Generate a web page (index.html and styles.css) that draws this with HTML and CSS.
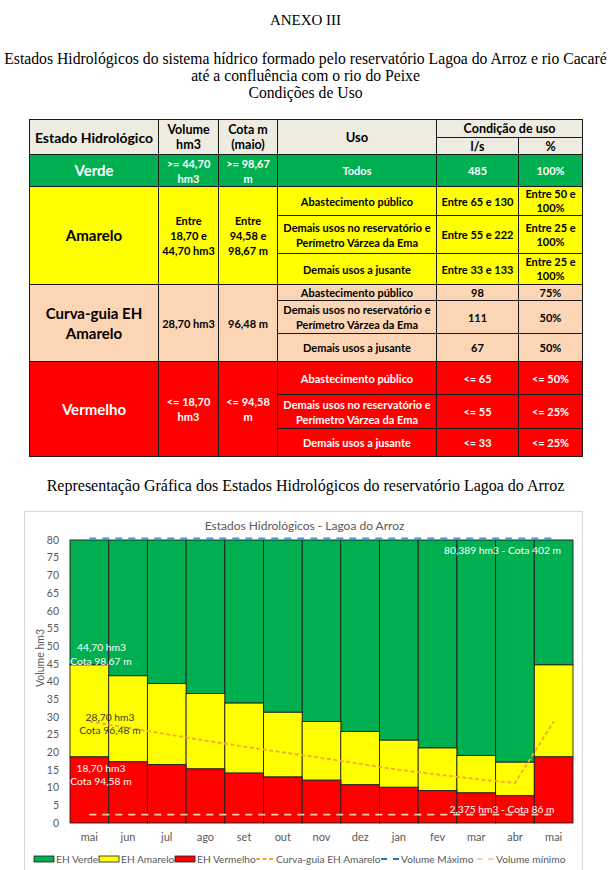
FILE: index.html
```html
<!DOCTYPE html>
<html lang="pt">
<head>
<meta charset="utf-8">
<title>Anexo III - Estados Hidrológicos</title>
<link rel="stylesheet" href="styles.css">
</head>
<body>
<header class="doc-head">
  <p class="annex">ANEXO III</p>
  <p class="title">Estados Hidrológicos do sistema hídrico formado pelo reservatório Lagoa do Arroz e rio Cacaré<br>até a confluência com o rio do Peixe<br>Condições de Uso</p>
</header>

<table class="eh-table">
  <colgroup>
    <col class="c-estado"><col class="c-vol"><col class="c-cota"><col class="c-uso"><col class="c-ls"><col class="c-pct">
  </colgroup>
  <thead>
    <tr class="h1">
      <th rowspan="2" class="big">Estado Hidrológico</th>
      <th rowspan="2">Volume<br>hm3</th>
      <th rowspan="2">Cota m<br>(maio)</th>
      <th rowspan="2" class="uso">Uso</th>
      <th colspan="2">Condição de uso</th>
    </tr>
    <tr class="h2">
      <th>l/s</th>
      <th class="pct-h">%</th>
    </tr>
  </thead>
  <tbody>
    <tr class="verde r-verde">
      <td class="state">Verde</td>
      <td>&gt;= 44,70<br>hm3</td>
      <td>&gt;= 98,67<br>m</td>
      <td>Todos</td>
      <td>485</td>
      <td>100%</td>
    </tr>
    <tr class="amarelo r-am1">
      <td rowspan="3" class="state">Amarelo</td>
      <td rowspan="3">Entre<br>18,70 e<br>44,70 hm3</td>
      <td rowspan="3">Entre<br>94,58 e<br>98,67 m</td>
      <td>Abastecimento público</td>
      <td>Entre 65 e 130</td>
      <td class="tight">Entre 50 e<br>100%</td>
    </tr>
    <tr class="amarelo r-am2">
      <td>Demais usos no reservatório e<br>Perímetro Várzea da Ema</td>
      <td>Entre 55 e 222</td>
      <td class="tight">Entre 25 e<br>100%</td>
    </tr>
    <tr class="amarelo r-am3">
      <td>Demais usos a jusante</td>
      <td>Entre 33 e 133</td>
      <td class="tight">Entre 25 e<br>100%</td>
    </tr>
    <tr class="curva r-cu1">
      <td rowspan="3" class="state state-2">Curva-guia EH<br>Amarelo</td>
      <td rowspan="3">28,70 hm3</td>
      <td rowspan="3">96,48 m</td>
      <td>Abastecimento público</td>
      <td>98</td>
      <td>75%</td>
    </tr>
    <tr class="curva r-cu2">
      <td>Demais usos no reservatório e<br>Perímetro Várzea da Ema</td>
      <td>111</td>
      <td>50%</td>
    </tr>
    <tr class="curva r-cu3">
      <td>Demais usos a jusante</td>
      <td>67</td>
      <td>50%</td>
    </tr>
    <tr class="vermelho r-ve1">
      <td rowspan="3" class="state">Vermelho</td>
      <td rowspan="3">&lt;= 18,70<br>hm3</td>
      <td rowspan="3">&lt;= 94,58<br>m</td>
      <td>Abastecimento público</td>
      <td>&lt;= 65</td>
      <td>&lt;= 50%</td>
    </tr>
    <tr class="vermelho r-ve2">
      <td>Demais usos no reservatório e<br>Perímetro Várzea da Ema</td>
      <td>&lt;= 55</td>
      <td>&lt;= 25%</td>
    </tr>
    <tr class="vermelho r-ve3">
      <td>Demais usos a jusante</td>
      <td>&lt;= 33</td>
      <td>&lt;= 25%</td>
    </tr>
  </tbody>
</table>

<p class="caption">Representação Gráfica dos Estados Hidrológicos do reservatório Lagoa do Arroz</p>

<div class="chart">
<svg class="chart-svg" width="557" height="359" viewBox="25 509 557 359" xmlns="http://www.w3.org/2000/svg">
  <text class="ct" x="304.5" y="526.5" text-anchor="middle">Estados Hidrológicos - Lagoa do Arroz</text>

  <g class="yt" text-anchor="end">
    <text x="59" y="540.7">80</text>
    <text x="59" y="558.4">75</text>
    <text x="59" y="576.1">70</text>
    <text x="59" y="593.8">65</text>
    <text x="59" y="611.5">60</text>
    <text x="59" y="629.1">55</text>
    <text x="59" y="646.8">50</text>
    <text x="59" y="664.5">45</text>
    <text x="59" y="682.2">40</text>
    <text x="59" y="699.9">35</text>
    <text x="59" y="717.6">30</text>
    <text x="59" y="735.3">25</text>
    <text x="59" y="753.0">20</text>
    <text x="59" y="770.6">15</text>
    <text x="59" y="788.3">10</text>
    <text x="59" y="806.0">5</text>
    <text x="59" y="823.7">0</text>
  </g>
  <text class="yt" transform="translate(44 655) rotate(-90)" text-anchor="middle">Volume hm3</text>

  <g class="bars">
    <g class="g-verde">
      <rect x="70" y="537" width="38.7" height="124.9"/>
      <rect x="108.7" y="537" width="38.7" height="135.8"/>
      <rect x="147.4" y="537" width="38.7" height="143.6"/>
      <rect x="186.1" y="537" width="38.7" height="153.5"/>
      <rect x="224.8" y="537" width="38.7" height="163.1"/>
      <rect x="263.5" y="537" width="38.7" height="172.3"/>
      <rect x="302.2" y="537" width="38.7" height="181.5"/>
      <rect x="340.8" y="537" width="38.7" height="191.4"/>
      <rect x="379.5" y="537" width="38.7" height="200.2"/>
      <rect x="418.2" y="537" width="38.7" height="208.0"/>
      <rect x="456.9" y="537" width="38.7" height="215.4"/>
      <rect x="495.6" y="537" width="38.7" height="222.2"/>
      <rect x="534.3" y="537" width="38.7" height="124.9"/>
    </g>
    <g class="g-amarelo">
      <rect x="70" y="661.9" width="38.7" height="92.0"/>
      <rect x="108.7" y="672.8" width="38.7" height="86.0"/>
      <rect x="147.4" y="680.6" width="38.7" height="81.0"/>
      <rect x="186.1" y="690.5" width="38.7" height="75.4"/>
      <rect x="224.8" y="700.1" width="38.7" height="70.0"/>
      <rect x="263.5" y="709.3" width="38.7" height="64.7"/>
      <rect x="302.2" y="718.5" width="38.7" height="58.7"/>
      <rect x="340.8" y="728.4" width="38.7" height="53.4"/>
      <rect x="379.5" y="737.2" width="38.7" height="47.1"/>
      <rect x="418.2" y="745.0" width="38.7" height="42.5"/>
      <rect x="456.9" y="752.4" width="38.7" height="37.5"/>
      <rect x="495.6" y="759.2" width="38.7" height="33.6"/>
      <rect x="534.3" y="661.9" width="38.7" height="92.0"/>
    </g>
    <g class="g-vermelho">
      <rect x="70" y="753.9" width="38.7" height="66.1"/>
      <rect x="108.7" y="758.8" width="38.7" height="61.2"/>
      <rect x="147.4" y="761.6" width="38.7" height="58.4"/>
      <rect x="186.1" y="765.9" width="38.7" height="54.1"/>
      <rect x="224.8" y="770.1" width="38.7" height="49.9"/>
      <rect x="263.5" y="774.0" width="38.7" height="46.0"/>
      <rect x="302.2" y="777.2" width="38.7" height="42.8"/>
      <rect x="340.8" y="781.8" width="38.7" height="38.2"/>
      <rect x="379.5" y="784.3" width="38.7" height="35.7"/>
      <rect x="418.2" y="787.5" width="38.7" height="32.5"/>
      <rect x="456.9" y="789.9" width="38.7" height="30.1"/>
      <rect x="495.6" y="792.8" width="38.7" height="27.2"/>
      <rect x="534.3" y="753.9" width="38.7" height="66.1"/>
    </g>
  </g>

  <polyline class="l-curva" points="89.3,718.5 128,724.8 166.7,731.2 205.4,737.6 244.1,743.6 282.8,749.3 321.5,754.9 360.2,760.9 398.9,766.9 437.6,771.5 476.3,776.1 515,780 553.7,718.5"/>
  <line class="l-max" x1="89.3" y1="535.6" x2="553.7" y2="535.6"/>
  <line class="l-min" x1="89.3" y1="811.6" x2="553.7" y2="811.6"/>

  <g class="lbl-w" text-anchor="middle">
    <text x="502.5" y="551">80,389 hm3 - Cota 402 m</text>
    <text x="101.5" y="648">44,70 hm3</text>
    <text x="101" y="662">Cota 98,67 m</text>
    <text x="101" y="769">18,70 hm3</text>
    <text x="101" y="782">Cota 94,58 m</text>
    <text x="502" y="810">2,375 hm3 - Cota 86 m</text>
  </g>
  <g class="lbl-d" text-anchor="middle">
    <text x="110" y="718">28,70 hm3</text>
    <text x="110" y="731">Cota 96,48 m</text>
  </g>

  <g class="xt" text-anchor="middle">
    <text x="89.3" y="838">mai</text>
    <text x="128" y="838">jun</text>
    <text x="166.7" y="838">jul</text>
    <text x="205.4" y="838">ago</text>
    <text x="244.1" y="838">set</text>
    <text x="282.8" y="838">out</text>
    <text x="321.5" y="838">nov</text>
    <text x="360.2" y="838">dez</text>
    <text x="398.9" y="838">jan</text>
    <text x="437.6" y="838">fev</text>
    <text x="476.3" y="838">mar</text>
    <text x="515" y="838">abr</text>
    <text x="553.7" y="838">mai</text>
  </g>

  <g class="legend">
    <rect class="sw-verde" x="34" y="853" width="20" height="6"/>
    <text x="56" y="860">EH Verde</text>
    <rect class="sw-amarelo" x="99" y="853" width="20" height="6"/>
    <text x="121" y="860">EH Amarelo</text>
    <rect class="sw-vermelho" x="175" y="853" width="20" height="6"/>
    <text x="197" y="860">EH Vermelho</text>
    <line class="lg-curva" x1="256" y1="856" x2="274" y2="856"/>
    <text x="276" y="860">Curva-guia EH Amarelo</text>
    <line class="lg-max" x1="381" y1="856" x2="399" y2="856"/>
    <text x="401" y="860">Volume Máximo</text>
    <line class="lg-min" x1="477" y1="856" x2="494" y2="856"/>
    <text x="496" y="860">Volume mínimo</text>
  </g>
</svg>
</div>
</body>
</html>
```

FILE: styles.css
```css
html, body {
  margin: 0;
  padding: 0;
  background: #ffffff;
}

body {
  font-family: "Liberation Serif", "Times New Roman", serif;
  color: #000;
}

.doc-head {
  text-align: center;
}

.annex {
  margin: 11px 0 0;
  font-size: 15px;
  line-height: 18px;
}

.title {
  margin: 21px 0 0;
  font-size: 15.7px;
  line-height: 17px;
  white-space: nowrap;
}

/* ---------- table ---------- */
.eh-table {
  border-collapse: collapse;
  table-layout: fixed;
  width: 553px;
  margin: 18px 0 0 29px;
  font-family: Lato, "Open Sans", sans-serif;
  font-weight: 700;
  font-size: 11px;
  text-align: center;
}

.c-estado { width: 129px; }
.c-vol { width: 60px; }
.c-cota { width: 59px; }
.c-uso { width: 159px; }
.c-ls { width: 82px; }
.c-pct { width: 64px; }

.eh-table th,
.eh-table td {
  border: 1px solid #1a1a1a;
  padding: 0 2px;
  vertical-align: middle;
  line-height: 15px;
  overflow: hidden;
}

.eh-table th {
  background: #eeece1;
  font-size: 12.5px;
  font-weight: 700;
}

.eh-table th.big {
  font-size: 14px;
}

.eh-table th.uso {
  font-size: 13px;
}

.eh-table th.pct-h {
  border-left-color: #9a9a9a;
}

.h1 { height: 18px; }
.h2 { height: 17px; }
.r-verde { height: 32px; }
.r-am1 { height: 28px; }
.r-am2 { height: 38px; }
.r-am3 { height: 31px; }
.r-cu1 { height: 15px; }
.r-cu2 { height: 33px; }
.r-cu3 { height: 28px; }
.r-ve1 { height: 33px; }
.r-ve2 { height: 34px; }
.r-ve3 { height: 28px; }

.eh-table tbody td {
  line-height: 15px;
}

.eh-table td.tight {
  line-height: 14px;
}

.r-cu1 td {
  line-height: 13px;
}

.r-cu2 td,
.r-am2 td,
.r-ve2 td {
  line-height: 15px;
}

.eh-table td.state {
  font-size: 15px;
}

.eh-table td.state-2 {
  line-height: 20px;
}

.verde td {
  background: #00b050;
  color: #ffffff;
}

.amarelo td {
  background: #ffff00;
  color: #000;
}

.curva td {
  background: #fcd5b4;
  color: #000;
}

.vermelho td {
  background: #ff0000;
  color: #ffffff;
}

/* ---------- caption ---------- */
.caption {
  margin: 20px 0 0;
  font-size: 16px;
  line-height: 18px;
  text-align: center;
  white-space: nowrap;
}

/* ---------- chart ---------- */
.chart {
  width: 559px;
  height: 361px;
  margin: 16px 0 0 24px;
  border: 1px solid #d9d9d9;
  box-sizing: border-box;
  background: #fff;
}

.chart-svg {
  display: block;
}

.ct {
  font-family: Lato, "Open Sans", sans-serif;
  font-size: 12px;
  fill: #595959;
}

.yt,
.xt,
.legend text {
  font-family: Lato, "Open Sans", sans-serif;
  font-size: 10.5px;
  fill: #595959;
}

.legend text {
  font-size: 10.2px;
}

.xt {
  font-size: 11px;
}

.bars rect {
  stroke: #1e1e1e;
  stroke-width: 0.9;
}

.g-verde rect { fill: #00b050; }
.g-amarelo rect { fill: #ffff00; }
.g-vermelho rect { fill: #ff0000; }

.l-curva {
  fill: none;
  stroke: #f0a838;
  stroke-width: 1.8;
  stroke-dasharray: 4 2.5;
}

.l-max {
  stroke: #3f97e6;
  stroke-width: 2.2;
  stroke-dasharray: 7 6;
}

.l-min {
  stroke: #f9cfb0;
  stroke-width: 1.8;
  stroke-dasharray: 7 6;
}

.lbl-w text,
.lbl-d text {
  font-family: Lato, "Open Sans", sans-serif;
  font-size: 10.3px;
}

.lbl-w text { fill: #ffffff; }
.lbl-d text { fill: #3a3a2a; }

.legend rect {
  stroke: #1e1e1e;
  stroke-width: 0.8;
}

.sw-verde { fill: #00b050; }
.sw-amarelo { fill: #ffff00; }
.sw-vermelho { fill: #ff0000; }

.lg-curva {
  stroke: #f0a838;
  stroke-width: 1.8;
  stroke-dasharray: 4 2.5;
}

.lg-max {
  stroke: #2e75b6;
  stroke-width: 2;
  stroke-dasharray: 6 6;
}

.lg-min {
  stroke: #f9cfb0;
  stroke-width: 2;
  stroke-dasharray: 6 5;
}
```
